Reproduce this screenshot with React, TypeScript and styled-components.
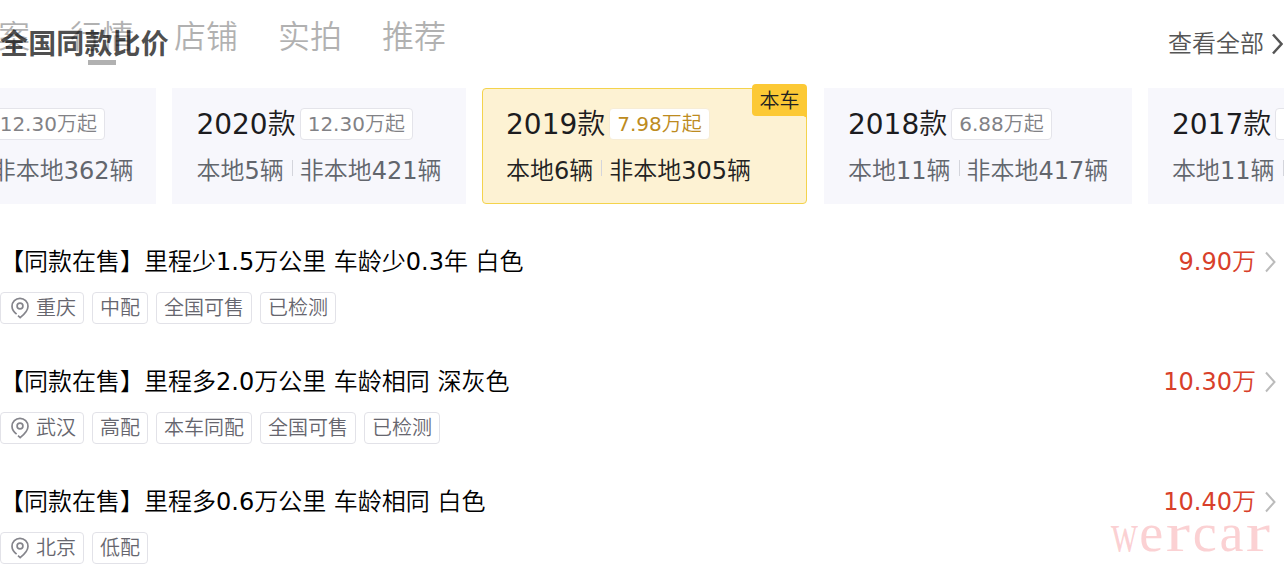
import React from 'react'
import styled, { createGlobalStyle } from 'styled-components'

const GlobalStyle = createGlobalStyle`
    body {
        margin: 0;
        overflow: hidden;
        background: #fff;
        font-family: "DejaVu Sans", "Noto Sans CJK SC DemiLight", "Noto Sans CJK SC", sans-serif;
    }

    * {
        box-sizing: border-box;
    }
`

const Page = styled.div`
    position: relative;
    width: 1284px;
    height: 564px;
    overflow: hidden;
    white-space: nowrap;
`

const Header = styled.header`
    display: flex;
    justify-content: space-between;
    align-items: center;
    height: 88px;
`

const Title = styled.h2`
    margin: 0;
    padding-top: 2px;
    font-family: "DejaVu Sans", "Noto Sans CJK SC", sans-serif;
    font-size: 28px;
    letter-spacing: 0.15px;
    line-height: 40px;
    font-weight: bold;
    color: rgba(0, 0, 0, 0.7);
`

const ViewAll = styled.a`
    display: flex;
    align-items: center;
    gap: 8px;
    margin-right: 1px;
    font-size: 24px;
    line-height: 36px;
    color: #555;
`

const TabBar = styled.nav`
    position: absolute;
    top: 12px;
    left: -34px;
    display: flex;
    gap: 40px;
    opacity: 0.3;
`

const Tab = styled.div<{ $active?: boolean }>`
    display: flex;
    flex-direction: column;
    align-items: center;
    font-family: "Noto Sans CJK SC", sans-serif;
    font-size: 32px;
    font-weight: 350;
    line-height: 45px;
    color: #000;

    &::after {
        content: '';
        width: 28px;
        height: 5px;
        margin-top: 3px;
        background: ${p => (p.$active ? '#000' : 'transparent')};
    }
`

const Cards = styled.section`
    display: flex;
    gap: 16px;
    margin-left: -136px;
`

const Card = styled.div<{ $width: number; $current?: boolean }>`
    position: relative;
    flex: none;
    width: ${p => p.$width}px;
    height: 116px;
    margin-right: ${p => (p.$current ? 0.6 : 0)}px;
    padding: ${p => (p.$current ? '16px 0 0 23px' : '17px 0 0 24.4px')};
    border: ${p => (p.$current ? '1px solid #f4d34c' : 'none')};
    border-radius: ${p => (p.$current ? 4 : 0)}px;
    background: ${p => (p.$current ? '#fdf2d3' : '#f7f7fc')};
    color: ${p => (p.$current ? '#222' : '#62666d')};
`

const CardTop = styled.div`
    display: flex;
    align-items: center;
    gap: 4px;
    height: 40px;
`

const Year = styled.span`
    font-size: 28px;
    line-height: 40px;
    color: #1c1c20;
`

const Price = styled.span<{ $current?: boolean }>`
    height: 32px;
    margin-top: -2px;
    padding: 0 7px;
    border: 1px solid ${p => (p.$current ? '#f7edd6' : '#e4e4ea')};
    border-radius: 4px;
    background: #fff;
    font-size: 20px;
    line-height: 30px;
    color: ${p => (p.$current ? '#bd8b20' : '#828286')};
`

const Counts = styled.div`
    display: flex;
    align-items: center;
    margin-top: 8px;
    font-size: 24px;
    line-height: 36px;
`

const Divider = styled.i`
    width: 1px;
    height: 16px;
    margin: -6px 7px 0 8px;
    background: #d4d5dc;
`

const Badge = styled.div`
    position: absolute;
    top: -5px;
    right: -1px;
    width: 55px;
    height: 32px;
    border-radius: 4px 4px 0 4px;
    background: #fcc935;
    font-size: 20px;
    line-height: 35px;
    text-align: center;
    color: #222;

    &::after {
        content: '';
        position: absolute;
        top: 32px;
        right: 0;
        width: 4px;
        height: 4px;
        background: radial-gradient(circle at 0 100%, transparent 3.5px, #fcc935 4px);
    }
`

const List = styled.section`
    padding-top: 40px;
`

const Row = styled.article`
    height: 120px;
`

const RowHead = styled.div`
    display: flex;
    justify-content: space-between;
    align-items: center;
    height: 36px;
    padding-right: 8px;
    font-size: 24px;
    line-height: 36px;
    color: #000;
`

const Amount = styled.span`
    display: flex;
    align-items: center;
    gap: 9px;
    color: #d8402a;
`

const Tags = styled.div`
    display: flex;
    gap: 8px;
    margin-top: 12px;
`

const Tag = styled.span`
    display: flex;
    align-items: center;
    height: 32px;
    padding: 0 7px;
    border: 1px solid #e2e2e8;
    border-radius: 4px;
    font-size: 20px;
    line-height: 30px;
    color: #66666e;
`

const PinSvg = styled.svg`
    margin: 0 6px 0 2px;
`

const Watermark = styled.div`
    position: absolute;
    top: 503px;
    left: 1111px;
    display: flex;
    font-family: "Liberation Serif", serif;
    font-size: 54px;
    line-height: 60px;
    color: rgba(240, 70, 80, 0.25);
`

const Letter = styled.span<{ $stretch: number }>`
    width: 26.8px;
    display: flex;
    justify-content: center;

    span {
        flex: none;
        transform: scaleX(${p => p.$stretch});
    }
`

const cards = [
    { year: '2021款', price: '12.30万起', local: '本地5辆', other: '非本地362辆', width: 292 },
    { year: '2020款', price: '12.30万起', local: '本地5辆', other: '非本地421辆', width: 294 },
    { year: '2019款', price: '7.98万起', local: '本地6辆', other: '非本地305辆', width: 325, current: true },
    { year: '2018款', price: '6.88万起', local: '本地11辆', other: '非本地417辆', width: 308 },
    { year: '2017款', price: '5.98万起', local: '本地11辆', other: '非本地402辆', width: 308 },
]

const rows = [
    { title: '【同款在售】里程少1.5万公里 车龄少0.3年 白色', price: '9.90万', city: '重庆', tags: ['中配', '全国可售', '已检测'] },
    { title: '【同款在售】里程多2.0万公里 车龄相同 深灰色', price: '10.30万', city: '武汉', tags: ['高配', '本车同配', '全国可售', '已检测'] },
    { title: '【同款在售】里程多0.6万公里 车龄相同 白色', price: '10.40万', city: '北京', tags: ['低配'] },
]

const tabs = ['档案', '行情', '店铺', '实拍', '推荐']

const letters: [string, number][] = [['w', 0.7], ['e', 1], ['r', 1.35], ['c', 1], ['a', 1], ['r', 1.35]]

function Arrow({ color, width = 2 }: { color: string; width?: number }) {
    return (
        <svg width="11" height="22" viewBox="0 0 11 22" fill="none" stroke={color} strokeWidth={width}>
            <path d="M1 1.5l8.5 9.5L1 20.5" />
        </svg>
    )
}

function Pin() {
    return (
        <PinSvg width="20" height="22" viewBox="0 0 20 22" fill="none" stroke="#85858c" strokeWidth="1.7">
            <path d="M6.6 17.2Q2 13.6 2 9.3A8 8 0 0 1 18 9.3Q18 14.6 10.2 20.6L8 18.7" />
            <circle cx="10" cy="9" r="2.9" />
        </PinSvg>
    )
}

function App() {
    return (
        <Page>
            <GlobalStyle />
            <Header>
                <Title>全国同款比价</Title>
                <ViewAll>查看全部<Arrow color="#555" width={2.5} /></ViewAll>
            </Header>
            <Cards>
                {cards.map(c => (
                    <Card key={c.year} $width={c.width} $current={c.current}>
                        <CardTop>
                            <Year>{c.year}</Year>
                            <Price $current={c.current}>{c.price}</Price>
                        </CardTop>
                        <Counts>{c.local}<Divider />{c.other}</Counts>
                        {c.current && <Badge>本车</Badge>}
                    </Card>
                ))}
            </Cards>
            <List>
                {rows.map(r => (
                    <Row key={r.title}>
                        <RowHead>
                            <span>{r.title}</span>
                            <Amount>{r.price}<Arrow color="#bbb" /></Amount>
                        </RowHead>
                        <Tags>
                            <Tag><Pin />{r.city}</Tag>
                            {r.tags.map(t => <Tag key={t}>{t}</Tag>)}
                        </Tags>
                    </Row>
                ))}
            </List>
            <TabBar>
                {tabs.map(t => <Tab key={t} $active={t === '行情'}>{t}</Tab>)}
            </TabBar>
            <Watermark>
                {letters.map(([l, s], i) => <Letter key={i} $stretch={s}><span>{l}</span></Letter>)}
            </Watermark>
        </Page>
    )
}

export default App
